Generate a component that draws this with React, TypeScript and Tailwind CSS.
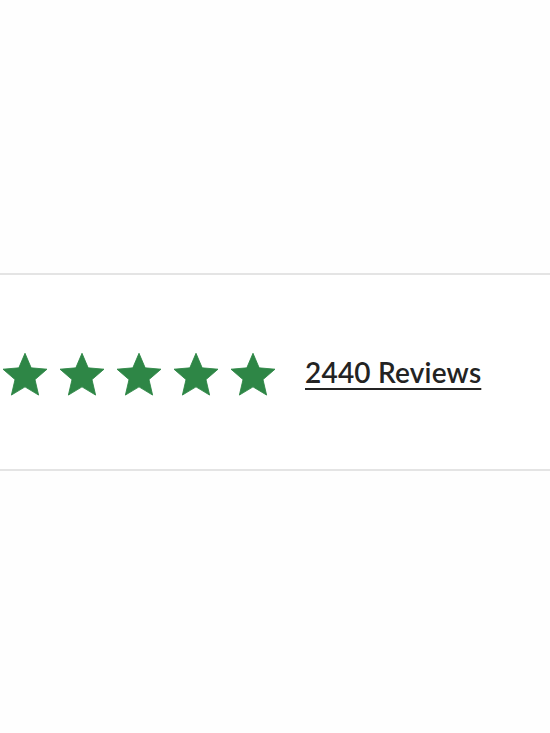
import React from "react";

function Star() {
  return (
    <svg viewBox="2 2 20 19.3" className="w-[44px] h-[43px] shrink-0" aria-hidden="true">
      <path
        d="M12 17.27L18.18 21l-1.64-7.03L22 9.24l-7.19-.61L12 2 9.19 8.63 2 9.24l5.46 4.73L5.82 21z"
        fill="#2e8646"
        stroke="#2e8646"
        strokeWidth="0.4"
        strokeLinejoin="round"
      />
    </svg>
  );
}

export default function App() {
  return (
    <div className="w-[550px] h-[733px] bg-white flex flex-col" style={{ fontFamily: "Lato, 'Open Sans', sans-serif" }}>
      <div className="h-[273px] shrink-0 bg-[#fefefe]" />
      <div className="h-[2px] shrink-0 bg-[#e4e4e4]" />
      <div className="h-[194px] shrink-0 flex items-center pl-[3px] bg-white">
        <div className="flex items-center gap-[13px] mt-[4px]">
          <Star />
          <Star />
          <Star />
          <Star />
          <Star />
        </div>
        <a
          href="#"
          className="ml-[30px] text-[28px] leading-none font-semibold tracking-[0.2px] text-[#232323] underline decoration-[2px] underline-offset-[5px]"
        >
          2440 Reviews
        </a>
      </div>
      <div className="h-[2px] shrink-0 bg-[#e4e4e4]" />
      <div className="flex-1 bg-[#fefefe]" />
    </div>
  );
}
